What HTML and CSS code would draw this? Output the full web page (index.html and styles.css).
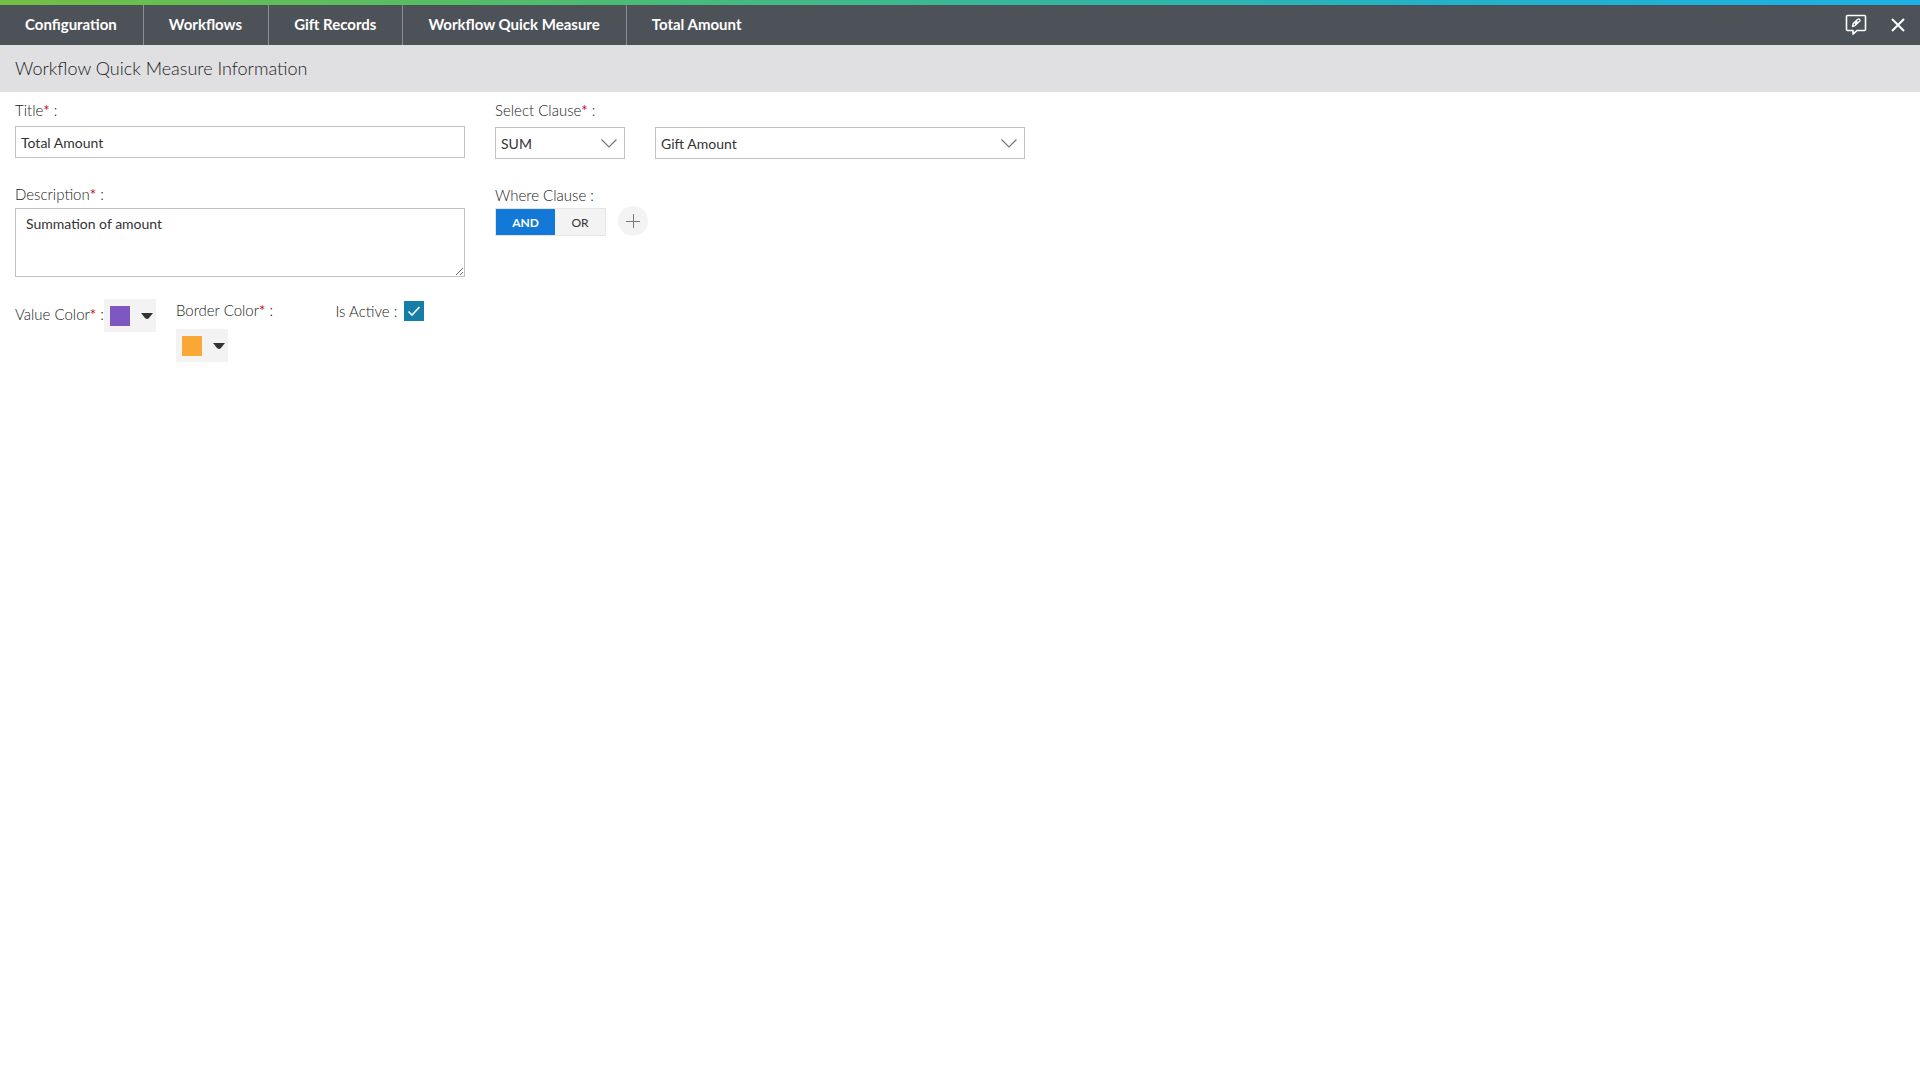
FILE: index.html
```html
<!DOCTYPE html>
<html lang="en">
<head>
<meta charset="utf-8">
<title>Workflow Quick Measure</title>
<link rel="stylesheet" href="styles.css">
</head>
<body>
<header class="topbar">
  <nav class="crumbs" aria-label="Breadcrumb">
    <a href="#">Configuration</a>
    <a href="#">Workflows</a>
    <a href="#">Gift Records</a>
    <a href="#">Workflow Quick Measure</a>
    <a href="#">Total Amount</a>
  </nav>
  <div class="actions">
    <button type="button" class="icon-btn" aria-label="Feedback">
      <svg width="22" height="22" viewBox="0 0 22 22" fill="none" stroke="#fff" stroke-width="1.6" stroke-linejoin="round"><path d="M2.5 1.5h17q1 0 1 1v13q0 1-1 1h-7.5l-4 3.700v-3.700H2.500q-1 0-1-1v-13q0-1 1-1z"/><path d="M7.500 12.500l.7-3 4.600-4.200q.9-.8 1.800.1t0 1.900L10 11.600zM9.800 10l2.600-2.400" stroke-width="1.400"/></svg>
    </button>
    <button type="button" class="icon-btn" aria-label="Close">
      <svg width="14" height="14" viewBox="0 0 14 14" stroke="#fff" stroke-width="2"><path d="M1 1l12 12M13 1L1 13"/></svg>
    </button>
  </div>
</header>
<h1 class="section-title">Workflow Quick Measure Information</h1>
<form class="form">
  <div class="details">
    <div class="field title-field">
      <label for="title">Title<span class="req">*</span> :</label>
      <input class="control" id="title" type="text" value="Total Amount">
    </div>
    <div class="field">
      <label for="description">Description<span class="req">*</span> :</label>
      <textarea class="control" id="description">Summation of amount</textarea>
    </div>
    <div class="options">
      <div class="value-color">
        <label for="value-color">Value Color<span class="req">*</span> :</label>
        <button type="button" class="picker" id="value-color"><span class="swatch purple"></span><svg width="12" height="6" viewBox="0 0 12 6"><path d="M0 0h12L8 5q-2 2-4 0z" fill="#333"/></svg></button>
      </div>
      <div class="border-color">
        <label for="border-color">Border Color<span class="req">*</span> :</label>
        <button type="button" class="picker" id="border-color"><span class="swatch orange"></span><svg width="12" height="6" viewBox="0 0 12 6"><path d="M0 0h12L8 5q-2 2-4 0z" fill="#333"/></svg></button>
      </div>
      <div class="active">
        <label for="active">Is Active :</label>
        <span class="check"><input id="active" type="checkbox" checked><svg width="20" height="20" viewBox="0 0 20 20" fill="none" stroke="#fff" stroke-width="1.600"><path d="M4.500 10.500l3.500 3.500 7.500-8"/></svg></span>
      </div>
    </div>
  </div>
  <div class="clauses">
    <div class="field select-field">
      <label for="aggregate">Select Clause<span class="req">*</span> :</label>
      <div class="selects">
        <div class="select"><select class="control" id="aggregate"><option>SUM</option></select><svg width="16" height="9" viewBox="0 0 16 9" fill="none" stroke="#777" stroke-width="1.200"><path d="M.5.5L8 8 15.500.5"/></svg></div>
        <div class="select"><select class="control" aria-label="Field"><option>Gift Amount</option></select><svg width="16" height="9" viewBox="0 0 16 9" fill="none" stroke="#777" stroke-width="1.200"><path d="M.5.5L8 8 15.500.5"/></svg></div>
      </div>
    </div>
    <div class="where">
      <span class="caption" id="where">Where Clause :</span>
      <div class="rule" role="group" aria-labelledby="where">
        <div class="toggle">
          <button type="button" class="on" aria-pressed="true">AND</button>
          <button type="button" aria-pressed="false">OR</button>
        </div>
        <button type="button" class="add" aria-label="Add condition"><svg width="14" height="14" viewBox="0 0 14 14" stroke="#777" stroke-width="1"><path d="M7.500 0v14M0 7.500h14"/></svg></button>
      </div>
    </div>
  </div>
</form>
</body>
</html>
```
FILE: styles.css
```css
* { box-sizing: border-box; }
body {
  margin: 0;
  background: #fff;
  color: #333;
  font-family: Lato, "Open Sans", sans-serif;
  font-size: 15px;
  font-weight: 300;
}
button, input, select, textarea { font-family: inherit; color: inherit; }
button { padding: 0; border: 0; cursor: pointer; }

.topbar {
  display: flex;
  justify-content: space-between;
  height: 45px;
  background: #4d5158;
  border-top: 5px solid;
  border-image: linear-gradient(to right, #72bf44, #52bd68 25%, #3ab795 50%, #22b2c8 75%, #1cb0e6) 1;
}
.crumbs { display: flex; }
.crumbs a {
  padding: 0 26px 0 25px;
  color: #fff;
  font-size: 15px;
  font-weight: 700;
  line-height: 38px;
  text-decoration: none;
}
.crumbs a + a { border-left: 1px solid #8b8e93; }
.actions { display: flex; align-items: center; gap: 24px; padding-right: 15px; }
.icon-btn { display: flex; background: none; }

.section-title {
  margin: 0;
  padding: 0 15px 1px;
  background: #e0e0e2;
  font-size: 18px;
  font-weight: 300;
  line-height: 46px;
  color: #222;
}

.form { display: grid; grid-template-columns: 25% 75%; }
.details, .clauses { padding: 8px 15px; }
.field { display: flex; flex-direction: column; }
label, .caption { line-height: 20px; color: #222; }
.req { color: #d0021b; font-weight: 400; line-height: 0; }
.control {
  width: 100%;
  height: 32px;
  padding: 0 5px;
  border: 1px solid #c2c2c4;
  border-radius: 0;
  background: #fff;
  font-size: 14px;
  font-weight: 400;
}
.title-field { gap: 6px; margin-bottom: 26px; }
textarea.control { display: block; height: 69px; margin-top: 4px; padding: 6px 10px; line-height: 18px; }

.options {
  display: grid;
  grid-template-columns: 1fr 1fr 1fr;
  margin: 22px -15px 0;
  align-items: start;
}
.options > div { padding-left: 15px; white-space: nowrap; }
.value-color { display: flex; justify-content: space-between; padding-right: 5px; }
.value-color label { line-height: 30px; }
.border-color { display: grid; gap: 9px; padding-top: 1px; }
.picker {
  display: flex;
  flex: none;
  align-items: center;
  justify-content: space-between;
  width: 52px;
  height: 33px;
  padding: 0 3px 0 6px;
  background: #f3f3f3;
}
.swatch { width: 20px; height: 20px; }
.purple { background: #7e57c2; }
.orange { background: #f9a835; }
.active { display: flex; align-items: center; gap: 7px; padding-top: 2px; }
.check, .select { display: grid; align-items: center; }
.check > *, .select > * { grid-area: 1 / 1; }
.check input { appearance: none; width: 20px; height: 20px; margin: 0; background: #147ea8; }
.check svg, .select svg { pointer-events: none; }
.select svg { justify-self: end; margin-right: 8px; }
.select select { appearance: none; }

.select-field { gap: 7px; margin-bottom: 26px; }
.selects { display: grid; grid-template-columns: 130px minmax(0, 370px); gap: 30px; }
.where { display: grid; gap: 1px; }
.rule { display: flex; align-items: flex-end; gap: 12px; }
.toggle { display: flex; height: 28px; border: 1px solid #e6e6e6; background: #f3f3f3; }
.toggle button { width: 50px; background: none; font-size: 12px; font-weight: 400; }
.toggle .on { width: 59px; background: #1279d8; color: #fff; font-weight: 700; }
.add {
  display: grid;
  place-items: center;
  width: 30px;
  height: 30px;
  border-radius: 50%;
  background: #f3f3f3;
}
```
